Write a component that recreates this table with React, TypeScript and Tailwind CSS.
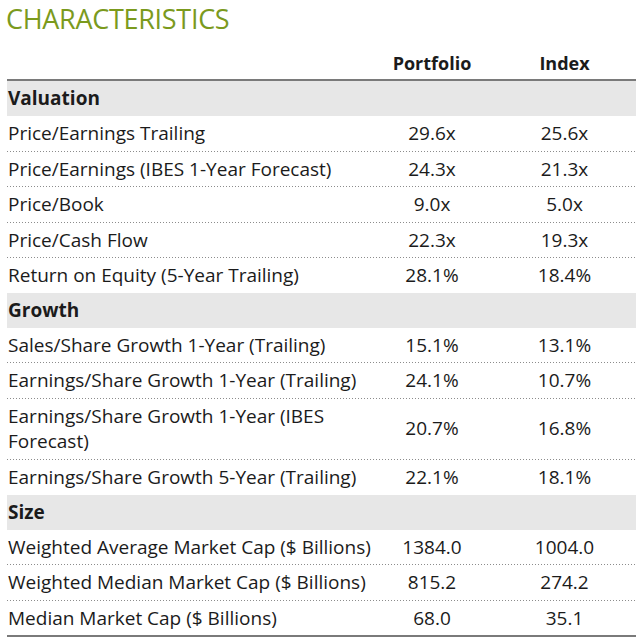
import React from "react";

type Row = { label: string; p: string; i: string; wrap?: string };
type Section = { title: string; rows: Row[] };

const sections: Section[] = [
  {
    title: "Valuation",
    rows: [
      { label: "Price/Earnings Trailing", p: "29.6x", i: "25.6x" },
      { label: "Price/Earnings (IBES 1-Year Forecast)", p: "24.3x", i: "21.3x" },
      { label: "Price/Book", p: "9.0x", i: "5.0x" },
      { label: "Price/Cash Flow", p: "22.3x", i: "19.3x" },
      { label: "Return on Equity (5-Year Trailing)", p: "28.1%", i: "18.4%" },
    ],
  },
  {
    title: "Growth",
    rows: [
      { label: "Sales/Share Growth 1-Year (Trailing)", p: "15.1%", i: "13.1%" },
      { label: "Earnings/Share Growth 1-Year (Trailing)", p: "24.1%", i: "10.7%" },
      {
        label: "Earnings/Share Growth 1-Year (IBES",
        wrap: "Forecast)",
        p: "20.7%",
        i: "16.8%",
      },
      { label: "Earnings/Share Growth 5-Year (Trailing)", p: "22.1%", i: "18.1%" },
    ],
  },
  {
    title: "Size",
    rows: [
      { label: "Weighted Average Market Cap ($ Billions)", p: "1384.0", i: "1004.0" },
      { label: "Weighted Median Market Cap ($ Billions)", p: "815.2", i: "274.2" },
      { label: "Median Market Cap ($ Billions)", p: "68.0", i: "35.1" },
    ],
  },
];

export default function App() {
  return (
    <div
      className="h-[641px] w-[640px] bg-white text-[#1b1b1b]"
      style={{ fontFamily: '"Open Sans", "Noto Sans", sans-serif' }}
    >
      <h1 className="pl-[6px] pt-[2px] text-[27px] leading-[34px] tracking-[-0.3px] text-[#7b9a1d]">
        CHARACTERISTICS
      </h1>
      <div className="ml-[7px] w-[629px]">
        <div className="flex h-[43px] items-end pb-[4px] text-[18px] font-bold leading-[24px]">
          <div className="w-[373px] shrink-0" />
          <div className="w-[104px] shrink-0 text-center">Portfolio</div>
          <div className="flex-1 pl-[11px] pr-[2px] text-center">Index</div>
        </div>
        <div className="h-[2px] bg-[#7a7a7a]" />
        {sections.map((s) => (
          <div key={s.title}>
            <div className="flex h-[35px] items-center bg-[#e7e7e7] px-[1px] text-[19px] font-bold">
              {s.title}
            </div>
            {s.rows.map((r, idx) => (
              <div key={r.label}>
                <div
                  className={`flex items-center pt-[5px] pb-[5.5px] text-[19px] ${
                    r.wrap ? "leading-[25px]" : "leading-[24px]"
                  }`}
                >
                  <div className="w-[373px] shrink-0 whitespace-nowrap pl-[1px]">
                    {r.label}
                    {r.wrap && (
                      <>
                        <br />
                        {r.wrap}
                      </>
                    )}
                  </div>
                  <div className="w-[104px] shrink-0 text-center">{r.p}</div>
                  <div className="flex-1 pl-[11px] pr-[2px] text-center">{r.i}</div>
                </div>
                {idx < s.rows.length - 1 && (
                  <div className="h-px bg-[repeating-linear-gradient(90deg,#8c8c8c_0px,#8c8c8c_1px,transparent_1px,transparent_3px)]" />
                )}
              </div>
            ))}
          </div>
        ))}
        <div className="h-[2px] bg-[#7a7a7a]" />
      </div>
    </div>
  );
}
